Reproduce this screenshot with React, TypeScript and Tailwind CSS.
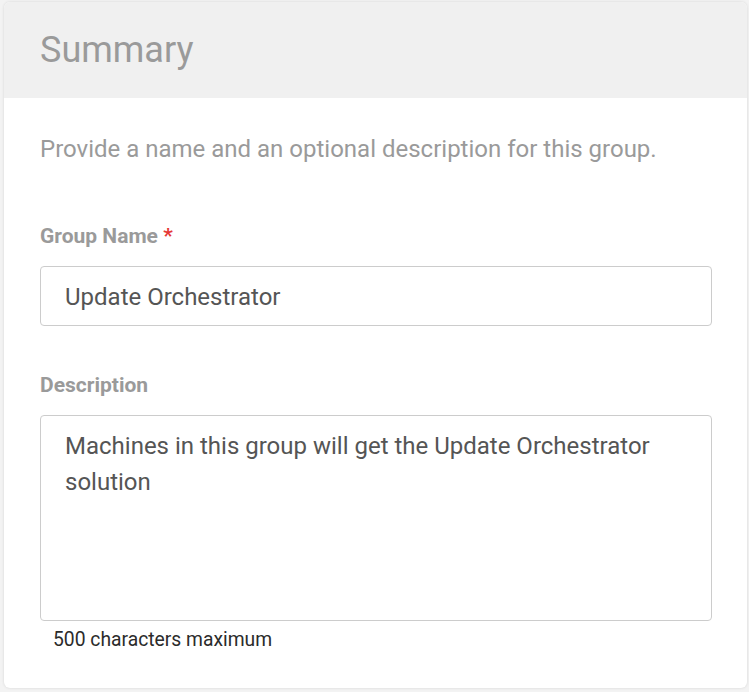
import { useState } from 'react';

export default function App() {
  const [name, setName] = useState('Update Orchestrator');
  const [description, setDescription] = useState(
    'Machines in this group will get the Update Orchestrator solution'
  );

  return (
    <div className="min-h-[692px] w-[749px] bg-[#f3f3f3] pl-[4px] pt-[2px] font-['Roboto',sans-serif]">
      <div className="w-[743px] h-[686px] bg-white rounded-[6px] shadow-[0_0_3px_rgba(0,0,0,0.12)] overflow-hidden flex flex-col">
        {/* Header */}
        <div className="h-[96px] bg-[#f0f0f0] flex items-center pl-[36px]">
          <h2 className="text-[36px] leading-none text-[#9a9a9a] font-normal">Summary</h2>
        </div>

        {/* Body */}
        <div className="px-[36px] pt-[37px] flex flex-col">
          <p className="text-[24px] leading-[28px] text-[#9a9a9a]">
            Provide a name and an optional description for this group.
          </p>

          <label className="mt-[60px] text-[21px] leading-[26px] font-bold text-[#9a9a9a]">
            Group Name <span className="text-[#e53935]">*</span>
          </label>
          <input
            type="text"
            value={name}
            onChange={(e) => setName(e.target.value)}
            className="mt-[17px] w-[672px] h-[60px] px-[24px] pt-[2px] text-[24px] text-[#555555] border border-[#cccccc] rounded-[4px] outline-none bg-white"
          />

          <label className="mt-[46px] text-[21px] leading-[26px] font-bold text-[#9a9a9a]">
            Description
          </label>
          <textarea
            value={description}
            onChange={(e) => setDescription(e.target.value)}
            className="mt-[17px] w-[672px] h-[206px] px-[24px] py-[12px] text-[24px] leading-[36px] text-[#555555] border border-[#cccccc] rounded-[4px] outline-none resize-none bg-white"
          />
          <span className="mt-[8px] pl-[13px] text-[19.3px] leading-[22px] text-[#2b2b2b]">
            500 characters maximum
          </span>
        </div>
      </div>
    </div>
  );
}
